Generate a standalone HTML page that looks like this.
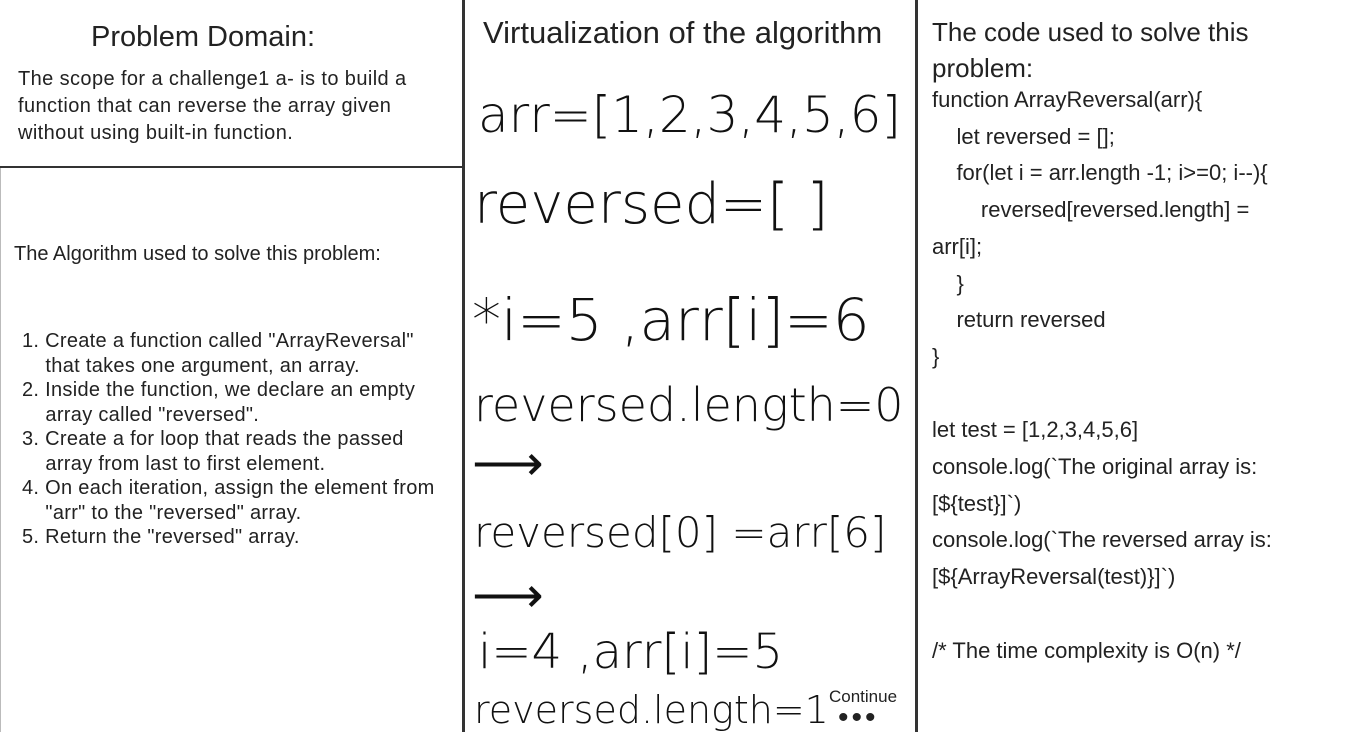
<!DOCTYPE html>
<html><head><meta charset="utf-8"><style>
body{margin:0;width:1364px;height:732px;background:#fff;position:relative;overflow:hidden;font-family:"Liberation Sans",sans-serif;color:#222}
.a{position:absolute;white-space:nowrap}
.l{position:absolute;background:#333}
.h{font-family:"DejaVu Sans",sans-serif;font-weight:200;color:#111;position:absolute;white-space:nowrap}
</style></head><body>
<div class="l" style="left:462px;top:0;width:3px;height:732px"></div>
<div class="l" style="left:915px;top:0;width:3px;height:732px"></div>
<div class="l" style="left:0;top:166px;width:463px;height:2px"></div>
<div class="l" style="left:0;top:168px;width:1px;height:564px;background:#bbb"></div>

<div class="a" style="left:91px;top:21px;font-size:29px">Problem Domain:</div>
<div class="a" style="left:18px;top:66px;font-size:20px;line-height:27px;letter-spacing:0.4px">The scope for a challenge1 a- is to build a<br>function that can reverse the array given<br>without using built-in function.</div>
<div class="a" style="left:14px;top:243px;font-size:20px">The Algorithm used to solve this problem:</div>
<div class="a" style="left:22px;top:329px;font-size:20px;line-height:24.5px;letter-spacing:0.3px">1. Create a function called "ArrayReversal"<br>&nbsp;&nbsp;&nbsp;&nbsp;that takes one argument, an array.<br>2. Inside the function, we declare an empty<br>&nbsp;&nbsp;&nbsp;&nbsp;array called "reversed".<br>3. Create a for loop that reads the passed<br>&nbsp;&nbsp;&nbsp;&nbsp;array from last to first element.<br>4. On each iteration, assign the element from<br>&nbsp;&nbsp;&nbsp;&nbsp;"arr" to the "reversed" array.<br>5. Return the "reversed" array.</div>

<div class="a" style="left:483px;top:15px;font-size:31px">Virtualization of the algorithm</div>
<div class="h" style="left:478px;top:86px;font-size:50px">arr=[1,2,3,4,5,6]</div>
<div class="h" style="left:474px;top:172px;font-size:56px">reversed=[ ]</div>
<div class="h" style="left:472px;top:286px;font-size:58px">*i=5 ,arr[i]=6</div>
<div class="h" style="left:474px;top:378px;font-size:46px">reversed.length=0</div>
<div class="h" style="left:472px;top:434px;font-size:50px">⟶</div>
<div class="h" style="left:474px;top:508px;font-size:42px">reversed[0] =arr[6]</div>
<div class="h" style="left:472px;top:566px;font-size:50px">⟶</div>
<div class="h" style="left:478px;top:624px;font-size:48px">i=4 ,arr[i]=5</div>
<div class="h" style="left:474px;top:688px;font-size:38px">reversed.length=1</div>
<div class="a" style="left:827px;top:687px;font-size:17px;background:#fff;padding:0 2px">Continue</div>
<div class="a" style="left:838px;top:704px;font-size:30px;letter-spacing:3px;line-height:28px;height:28px">•••</div>

<div class="a" style="left:932px;top:14px;font-size:26px;line-height:36px">The code used to solve this<br>problem:</div>
<div class="a" style="left:932px;top:82px;font-size:22px;line-height:36.7px">function ArrayReversal(arr){<br>&nbsp;&nbsp;&nbsp;&nbsp;let reversed = [];<br>&nbsp;&nbsp;&nbsp;&nbsp;for(let i = arr.length -1; i&gt;=0; i--){<br>&nbsp;&nbsp;&nbsp;&nbsp;&nbsp;&nbsp;&nbsp;&nbsp;reversed[reversed.length] =<br>arr[i];<br>&nbsp;&nbsp;&nbsp;&nbsp;}<br>&nbsp;&nbsp;&nbsp;&nbsp;return reversed<br>}<br><br>let test = [1,2,3,4,5,6]<br>console.log(`The original array is:<br>[${test}]`)<br>console.log(`The reversed array is:<br>[${ArrayReversal(test)}]`)<br><br>/* The time complexity is O(n) */</div>
</body></html>
